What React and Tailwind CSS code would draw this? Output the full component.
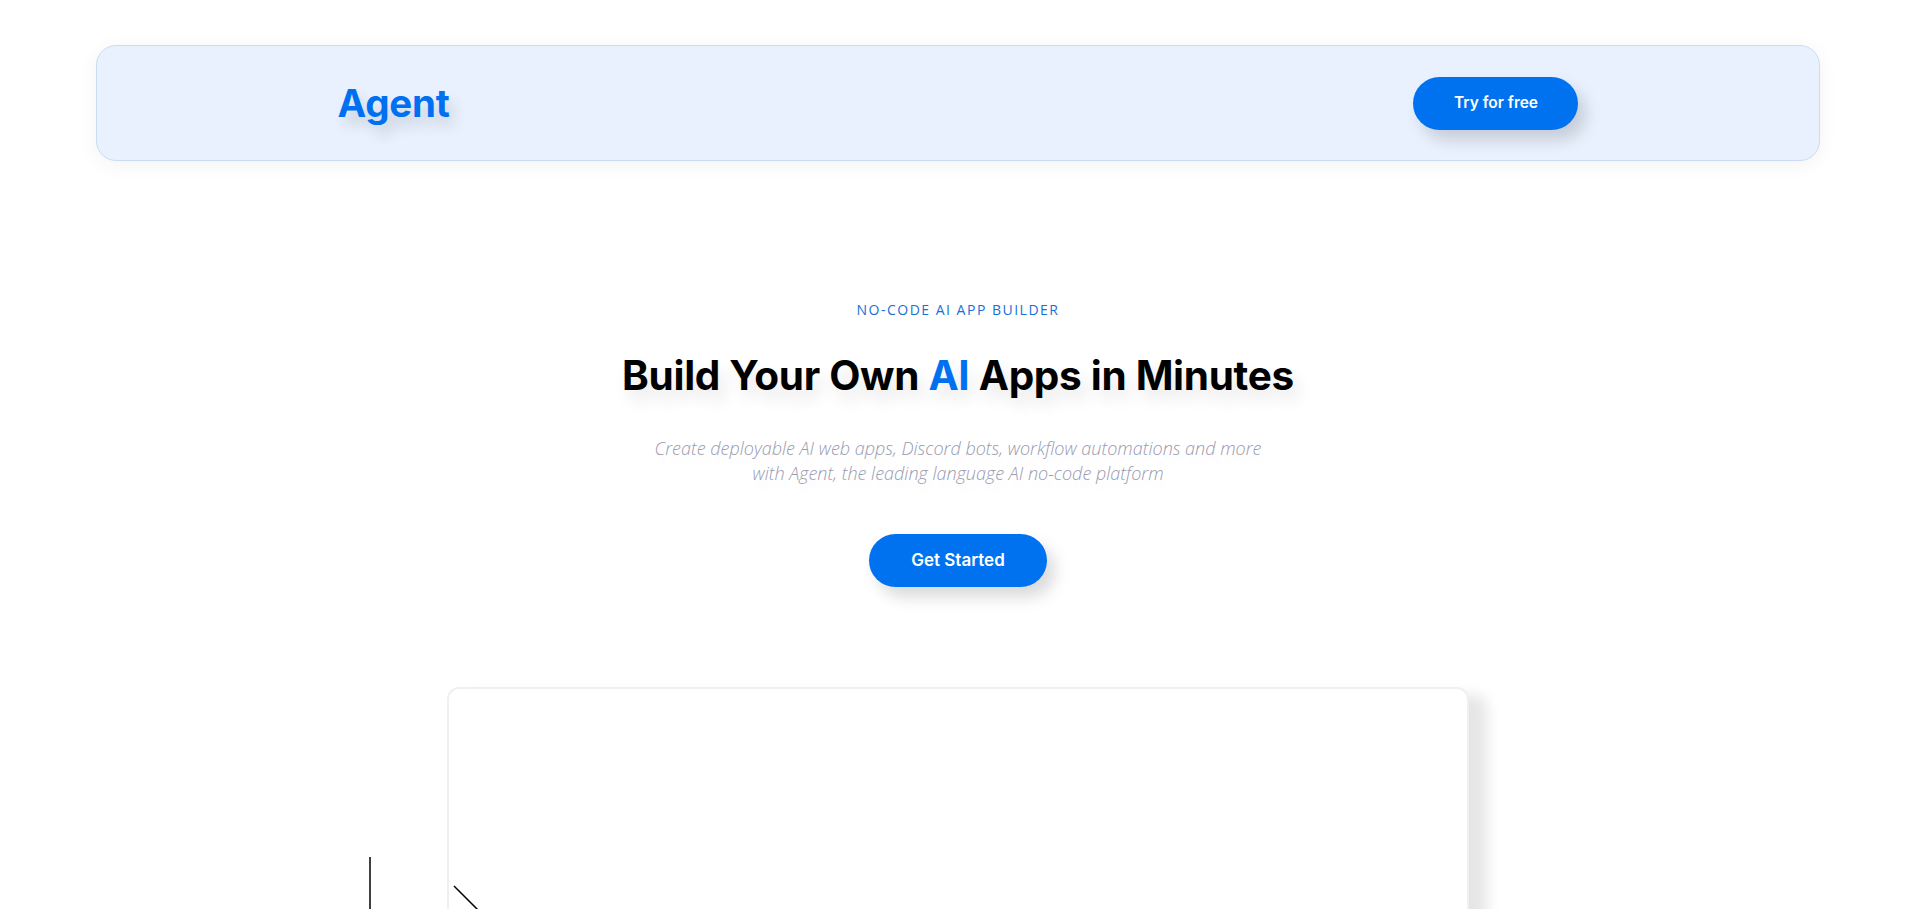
export default function App() {
  return (
    <div className="min-h-screen bg-white overflow-hidden" style={{ height: 909 }}>
      <header className="w-[90%] mx-auto mt-[45px] h-[116px] rounded-[20px] border border-[#cadcf4] bg-[#e8f1fd] shadow-[0_4px_20px_rgba(0,0,0,0.05)]">
        <div className="max-w-[1241px] mx-auto h-full flex items-center justify-between">
          <div className="font-['Inter',sans-serif] font-bold text-[38.5px] leading-none text-[#0070f0] tracking-[-0.2px] [text-shadow:6px_10px_14px_rgba(0,0,0,0.14)]">
            Agent
          </div>
          <button className="w-[165px] h-[53px] rounded-full bg-[#0072f0] text-white font-['Inter',sans-serif] font-semibold text-[15.5px] shadow-[8px_10px_16px_rgba(0,0,0,0.15)]">
            Try for free
          </button>
        </div>
      </header>

      <section className="flex flex-col items-center pt-[139px]">
        <div className="font-['Open_Sans',sans-serif] text-[14px] leading-[20px] tracking-[1.5px] text-[#1a6fd6]">
          NO-CODE AI APP BUILDER
        </div>
        <h1 className="mt-[32px] font-['Inter',sans-serif] font-bold text-[40.5px] leading-[48px] text-black tracking-[-0.3px] [text-shadow:6px_10px_16px_rgba(0,0,0,0.1)]">
          Build Your Own <span className="text-[#0070f0]">AI</span> Apps in Minutes
        </h1>
        <p className="mt-[36px] text-center font-['Open_Sans',sans-serif] font-light italic text-[18px] leading-[25px] text-[#9a9ab0] [text-shadow:4px_8px_10px_rgba(0,0,0,0.06)]">
          Create deployable AI web apps, Discord bots, workflow automations and more
          <br />
          with Agent, the leading language AI no-code platform
        </p>
        <button className="mt-[48px] w-[178px] h-[53px] rounded-full bg-[#0072f0] text-white font-['Inter',sans-serif] font-semibold text-[17px] shadow-[8px_10px_16px_rgba(0,0,0,0.15)]">
          Get Started
        </button>

        <div className="relative mt-[100px] w-[1022px]">
          <div className="h-[500px] rounded-[12px] border-2 border-[#f0f0f0] bg-white shadow-[18px_8px_14px_rgba(0,0,0,0.1)]"></div>
          <svg className="absolute left-[-90px] top-[168px]" width="160" height="60" viewBox="0 0 160 60">
            <line x1="13" y1="2" x2="13" y2="60" stroke="#000" strokeWidth="1.5" />
            <line x1="97" y1="31" x2="127" y2="61" stroke="#000" strokeWidth="1.5" />
          </svg>
        </div>
      </section>
    </div>
  );
}
